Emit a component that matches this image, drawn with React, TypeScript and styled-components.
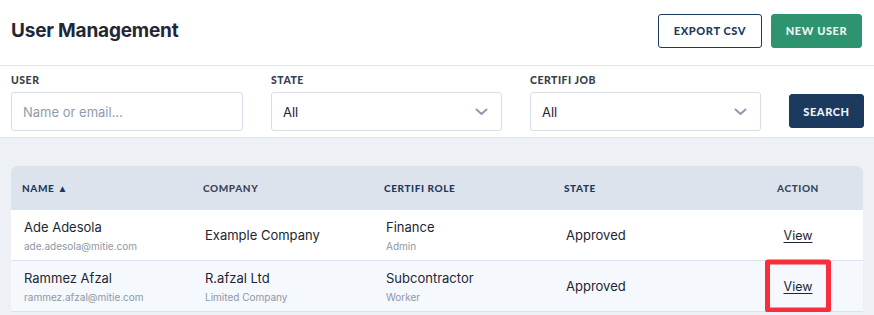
import React, { FunctionComponent } from 'react';
import styled, { createGlobalStyle } from 'styled-components';

const GlobalStyle = createGlobalStyle`
  html, body {
    margin: 0;
    padding: 0;
    background: #edf1f5;
  }
  * {
    box-sizing: border-box;
  }
`;

const NAVY = '#1b3a5e';

const Page = styled.div`
  display: flex;
  flex-direction: column;
  font-family: Inter, 'Noto Sans', sans-serif;
  color: #1e2633;
  min-height: 315px;
`;

const TopBar = styled.header`
  display: flex;
  align-items: center;
  justify-content: space-between;
  height: 66px;
  padding: 0 12px 4px 11px;
  background: #fff;
  border-bottom: 1px solid #e1e5eb;
`;

const Title = styled.h1`
  margin: 0;
  font-size: 19px;
  font-weight: 700;
  color: #1f2836;
  letter-spacing: -0.2px;
`;

const Actions = styled.div`
  display: flex;
  gap: 9px;
`;

const Button = styled.button<{ $variant: 'outline' | 'green' | 'navy'; $width: number }>`
  font-family: Lato, 'Open Sans', sans-serif;
  font-weight: 900;
  font-size: 11px;
  letter-spacing: 0.6px;
  text-transform: uppercase;
  width: ${({ $width }) => $width}px;
  height: 34px;
  padding: 0;
  border-radius: 3px;
  cursor: pointer;
  border: 1px solid ${({ $variant }) => ($variant === 'green' ? '#2e9470' : NAVY)};
  background: ${({ $variant }) =>
    $variant === 'outline' ? '#fff' : $variant === 'green' ? '#2e9470' : NAVY};
  color: ${({ $variant }) => ($variant === 'outline' ? NAVY : '#eef4f2')};
`;

const Filters = styled.section`
  display: grid;
  grid-template-columns: 232px 231px 231px 1fr;
  column-gap: 28px;
  align-items: end;
  padding: 8px 12px 6px 11px;
  background: #fff;
  border-bottom: 1px solid #e1e5eb;
`;

const Field = styled.label`
  display: flex;
  flex-direction: column;
  gap: 6px;
`;

const FieldLabel = styled.span`
  font-family: Lato, 'Open Sans', sans-serif;
  font-weight: 900;
  font-size: 10.5px;
  letter-spacing: 0.5px;
  color: #353f4e;
`;

const Input = styled.input`
  height: 39px;
  padding: 0 11px;
  border: 1px solid #d9dee6;
  border-radius: 3px;
  font-family: Inter, sans-serif;
  font-size: 13px;
  color: #1e2633;
  outline: none;
  &::placeholder {
    color: #8f9bad;
  }
`;

const SelectBox = styled.div`
  display: flex;
  align-items: center;
  justify-content: space-between;
  height: 39px;
  padding: 0 13px 0 11px;
  border: 1px solid #d9dee6;
  border-radius: 3px;
  font-size: 13px;
  color: #1e2633;
  background: #fff;
`;

const SearchButton = styled(Button)`
  justify-self: end;
  margin-bottom: 3px;
`;

const Content = styled.main`
  padding: 28px 11px 0 11px;
`;

const Card = styled.div`
  background: #fff;
  border-radius: 6px 6px 0 0;
  overflow: hidden;
`;

const Row = styled.div<{ $head?: boolean; $alt?: boolean }>`
  display: grid;
  grid-template-columns: 181px 181px 180px 180px 1fr;
  align-items: center;
  height: ${({ $head }) => ($head ? '44px' : '51px')};
  background: ${({ $head, $alt }) => ($head ? '#dde3ec' : $alt ? '#f5f8fc' : '#fff')};
  border-bottom: ${({ $head }) => ($head ? 'none' : '1px solid #dde3ec')};
`;

const HeadCell = styled.div<{ $muted?: boolean; $center?: boolean }>`
  padding-left: ${({ $center }) => ($center ? '0' : '11px')};
  text-align: ${({ $center }) => ($center ? 'center' : 'left')};
  font-family: Lato, 'Open Sans', sans-serif;
  font-weight: 900;
  font-size: 10px;
  letter-spacing: 0.6px;
  color: ${({ $muted }) => ($muted ? '#36465a' : '#1b3a5e')};
`;

const Cell = styled.div<{ $center?: boolean }>`
  position: relative;
  display: flex;
  flex-direction: column;
  align-items: ${({ $center }) => ($center ? 'center' : 'flex-start')};
  gap: 5px;
  padding-left: ${({ $center }) => ($center ? '0' : '13px')};
`;

const Main = styled.span`
  font-size: 13px;
  line-height: 16px;
  color: #1e2633;
`;

const Sub = styled.span`
  font-size: 10px;
  line-height: 12px;
  color: #8e97a5;
`;

const ViewLink = styled.a`
  font-size: 12.5px;
  color: #1e2633;
  text-decoration: underline;
  text-underline-offset: 2px;
`;

const Highlight = styled.span`
  position: absolute;
  left: 50%;
  top: 50%;
  width: 66px;
  height: 53px;
  transform: translate(-50%, -50%);
  border: 5px solid #fb2c3c;
  border-radius: 3px;
  pointer-events: none;
`;

const Chevron: FunctionComponent = () => (
  <svg width="13" height="8" viewBox="0 0 13 8" fill="none">
    <path d="M1.5 1.5 L6.5 6 L11.5 1.5" stroke="#8d9ab0" strokeWidth="2" strokeLinecap="round" strokeLinejoin="round" />
  </svg>
);

const users = [
  { name: 'Ade Adesola', email: 'ade.adesola@mitie.com', company: 'Example Company', companyType: '', role: 'Finance', roleType: 'Admin', state: 'Approved' },
  { name: 'Rammez Afzal', email: 'rammez.afzal@mitie.com', company: 'R.afzal Ltd', companyType: 'Limited Company', role: 'Subcontractor', roleType: 'Worker', state: 'Approved' },
];

const App: FunctionComponent = () => {
  return (
    <Page>
      <GlobalStyle />
      <TopBar>
        <Title>User Management</Title>
        <Actions>
          <Button $variant="outline" $width={104}>Export CSV</Button>
          <Button $variant="green" $width={91}>New User</Button>
        </Actions>
      </TopBar>
      <Filters>
        <Field>
          <FieldLabel>USER</FieldLabel>
          <Input placeholder="Name or email..." />
        </Field>
        <Field>
          <FieldLabel>STATE</FieldLabel>
          <SelectBox>
            <span>All</span>
            <Chevron />
          </SelectBox>
        </Field>
        <Field>
          <FieldLabel>CERTIFI JOB</FieldLabel>
          <SelectBox>
            <span>All</span>
            <Chevron />
          </SelectBox>
        </Field>
        <SearchButton $variant="navy" $width={75}>Search</SearchButton>
      </Filters>
      <Content>
        <Card>
          <Row $head>
            <HeadCell>NAME ▲</HeadCell>
            <HeadCell $muted>COMPANY</HeadCell>
            <HeadCell>CERTIFI ROLE</HeadCell>
            <HeadCell>STATE</HeadCell>
            <HeadCell $muted $center>ACTION</HeadCell>
          </Row>
          {users.map((u, i) => (
            <Row key={u.email} $alt={i % 2 === 1}>
              <Cell>
                <Main>{u.name}</Main>
                <Sub>{u.email}</Sub>
              </Cell>
              <Cell>
                <Main>{u.company}</Main>
                {u.companyType && <Sub>{u.companyType}</Sub>}
              </Cell>
              <Cell>
                <Main>{u.role}</Main>
                <Sub>{u.roleType}</Sub>
              </Cell>
              <Cell>
                <Main>{u.state}</Main>
              </Cell>
              <Cell $center>
                <ViewLink href="#">View</ViewLink>
                {i === 1 && <Highlight />}
              </Cell>
            </Row>
          ))}
        </Card>
      </Content>
    </Page>
  );
};

export default App;
